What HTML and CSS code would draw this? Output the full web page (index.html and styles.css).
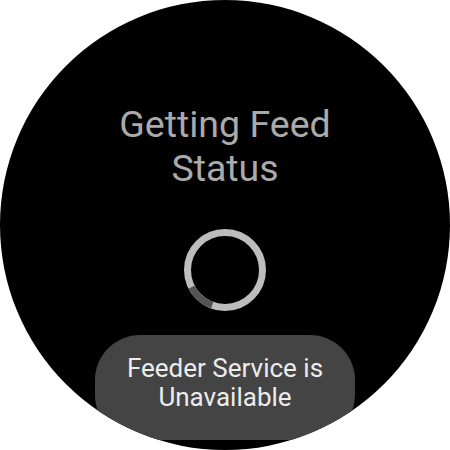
FILE: index.html
```html
<!DOCTYPE html>
<html>
<head>
<meta charset="utf-8">
<link rel="stylesheet" href="styles.css">
</head>
<body>
<div class="watch">
  <div class="screen">
    <h1 class="title">Getting Feed<br>Status</h1>
    <svg class="spinner" width="84" height="84" viewBox="0 0 84 84">
      <circle cx="42" cy="42" r="37.5" fill="none" stroke="#bdbdbd" stroke-width="7"/>
      <path d="M 8.6 59.1 A 37.5 37.5 0 0 0 29.2 77.2" fill="none" stroke="#545454" stroke-width="7"/>
    </svg>
  </div>
  <div class="toast">Feeder Service is<br>Unavailable</div>
</div>
</body>
</html>
```
FILE: styles.css
```css
html, body {
  margin: 0;
  padding: 0;
  background: #ffffff;
}
.watch {
  position: relative;
  width: 450px;
  height: 450px;
  border-radius: 50%;
  background: #000000;
  overflow: hidden;
  font-family: Roboto, "Noto Sans", sans-serif;
}
.screen {
  display: flex;
  flex-direction: column;
  align-items: center;
  padding-top: 102px;
}
.title {
  margin: 0;
  font-size: 37.5px;
  line-height: 44px;
  font-weight: 400;
  color: #aaaaaa;
  text-align: center;
}
.spinner {
  margin-top: 38px;
  display: block;
}
.toast {
  position: absolute;
  left: 95px;
  top: 335px;
  width: 260px;
  height: 105px;
  box-sizing: border-box;
  padding-top: 19px;
  border-radius: 45px;
  background: #444444;
  color: #ececec;
  font-size: 26px;
  line-height: 29px;
  text-align: center;
}
```
